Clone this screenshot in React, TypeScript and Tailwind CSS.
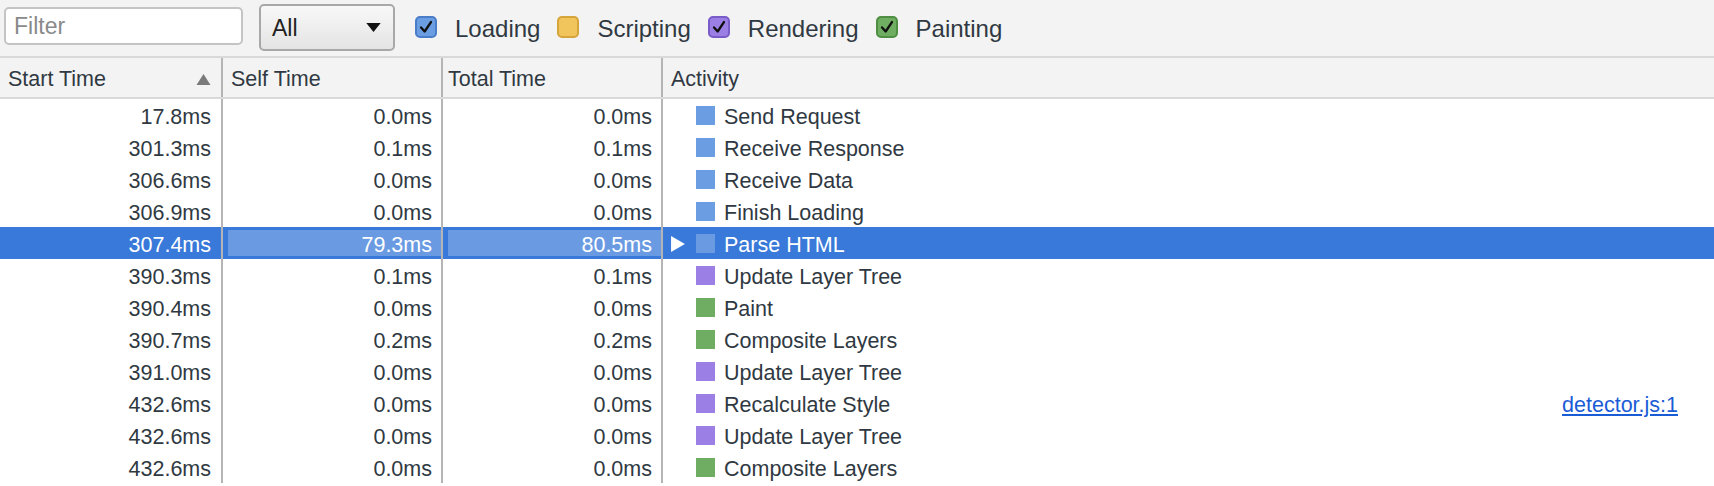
import React from 'react'

type Kind = 'loading' | 'scripting' | 'rendering' | 'painting'

interface Row {
  start: string
  self: string
  total: string
  activity: string
  kind: Kind
  link?: string
}

const rows: Row[] = [
  { start: '17.8ms', self: '0.0ms', total: '0.0ms', activity: 'Send Request', kind: 'loading' },
  { start: '301.3ms', self: '0.1ms', total: '0.1ms', activity: 'Receive Response', kind: 'loading' },
  { start: '306.6ms', self: '0.0ms', total: '0.0ms', activity: 'Receive Data', kind: 'loading' },
  { start: '306.9ms', self: '0.0ms', total: '0.0ms', activity: 'Finish Loading', kind: 'loading' },
  { start: '307.4ms', self: '79.3ms', total: '80.5ms', activity: 'Parse HTML', kind: 'loading' },
  { start: '390.3ms', self: '0.1ms', total: '0.1ms', activity: 'Update Layer Tree', kind: 'rendering' },
  { start: '390.4ms', self: '0.0ms', total: '0.0ms', activity: 'Paint', kind: 'painting' },
  { start: '390.7ms', self: '0.2ms', total: '0.2ms', activity: 'Composite Layers', kind: 'painting' },
  { start: '391.0ms', self: '0.0ms', total: '0.0ms', activity: 'Update Layer Tree', kind: 'rendering' },
  { start: '432.6ms', self: '0.0ms', total: '0.0ms', activity: 'Recalculate Style', kind: 'rendering', link: 'detector.js:1' },
  { start: '432.6ms', self: '0.0ms', total: '0.0ms', activity: 'Update Layer Tree', kind: 'rendering' },
  { start: '432.6ms', self: '0.0ms', total: '0.0ms', activity: 'Composite Layers', kind: 'painting' },
]

const SELECTED = 4

const swatch: Record<Kind, string> = {
  loading: 'bg-[#6b9de2]',
  scripting: 'bg-[#f2c45c]',
  rendering: 'bg-[#9b7fe5]',
  painting: 'bg-[#6fae62]',
}

const checkbox: Record<Kind, string> = {
  loading: 'bg-[#6b9de2] border-[#4a7cc8]',
  scripting: 'bg-[#f2c45c] border-[#d6a53a]',
  rendering: 'bg-[#9b7fe5] border-[#7a5cc8]',
  painting: 'bg-[#6fae62] border-[#4f8f43]',
}

function Check() {
  return (
    <svg viewBox="0 0 20 20" className="w-[18px] h-[18px]">
      <path d="M4.5 10.5 L8.5 15 L15.5 4.5" fill="none" stroke="#111" strokeWidth="2.6" strokeLinecap="round" strokeLinejoin="round" />
    </svg>
  )
}

function CategoryBox({ kind, label, checked }: { kind: Kind; label: string; checked: boolean }) {
  return (
    <label className="flex items-center gap-[18px] mr-[17px]">
      <span className={`w-[22px] h-[22px] rounded-[5px] border-2 flex items-center justify-center ${checkbox[kind]}`}>
        {checked && <Check />}
      </span>
      <span className="pt-[3px]">{label}</span>
    </label>
  )
}

export default function App() {
  return (
    <div className="w-[1714px] h-[486px] overflow-hidden bg-white text-[#303942] text-[21.5px] font-['Liberation_Sans',Arial,sans-serif]">
      {/* toolbar */}
      <div className="h-[58px] bg-[#f3f3f3] border-b-2 border-[#d9d9d9] flex items-start pl-[4px] pt-[4px]">
        <div className="mt-[3px] w-[239px] h-[38px] bg-white border-2 border-[#c4c4c4] rounded-[5px] flex items-center pl-[8px] text-[#8a8a8a] text-[23px]">
          Filter
        </div>
        <div className="ml-[16px] w-[136px] h-[47px] rounded-[5px] border-2 border-[#a8a8a8] bg-gradient-to-b from-[#f8f8f8] to-[#e4e4e4] flex items-center justify-between pl-[11px] pr-[12px] text-[#222] text-[23px]">
          <span className="pt-[2px]">All</span>
          <svg viewBox="0 0 16 10" className="w-[15px] h-[9px]">
            <path d="M0 0 L16 0 L8 10 Z" fill="#111" />
          </svg>
        </div>
        <div className="ml-[20px] h-[46px] flex items-center text-[#303942] text-[24px]">
          <CategoryBox kind="loading" label="Loading" checked />
          <CategoryBox kind="scripting" label="Scripting" checked={false} />
          <CategoryBox kind="rendering" label="Rendering" checked />
          <CategoryBox kind="painting" label="Painting" checked />
        </div>
      </div>

      {/* header */}
      <div className="h-[41px] bg-[#f3f3f3] border-b-2 border-[#d9d9d9] flex">
        <div className="w-[221px] flex items-center justify-between pl-[8px] pr-[10px]">
          <span className="pt-[4px]">Start Time</span>
          <svg viewBox="0 0 14 11" className="w-[15px] h-[11px] mt-[3px]">
            <path d="M7 0 L14 11 L0 11 Z" fill="#7a7a7a" />
          </svg>
        </div>
        <div className="w-[220px] border-l-2 border-[#b5b5b5] flex items-center pl-[8px]"><span className="pt-[4px]">Self Time</span></div>
        <div className="w-[220px] border-l-2 border-[#b5b5b5] flex items-center pl-[5px]"><span className="pt-[4px]">Total Time</span></div>
        <div className="flex-1 border-l-2 border-[#b5b5b5] flex items-center pl-[8px]"><span className="pt-[4px]">Activity</span></div>
      </div>

      {/* rows */}
      {rows.map((r, i) => {
        const sel = i === SELECTED
        return (
          <div key={i} className={`h-[32px] flex ${sel ? 'bg-[#3879d9] text-white' : ''}`}>
            <div className="w-[221px] flex items-center justify-end pr-[10px]">
              <span className="pt-[4px]">{r.start}</span>
            </div>
            <div className="w-[220px] border-l-2 border-[#b5b5b5] flex items-stretch pl-[5px] py-[3px]">
              <div className={`flex-1 flex items-center justify-end pr-[9px] ${sel ? 'bg-[#6a9be2]' : ''}`}>
                <span className="pt-[4px]">{r.self}</span>
              </div>
            </div>
            <div className="w-[220px] border-l-2 border-[#b5b5b5] flex items-stretch pl-[5px] py-[3px]">
              <div className={`flex-1 flex items-center justify-end pr-[9px] ${sel ? 'bg-[#6a9be2]' : ''}`}>
                <span className="pt-[4px]">{r.total}</span>
              </div>
            </div>
            <div className="flex-1 border-l-2 border-[#b5b5b5] flex items-center pl-[8px] pr-[36px]">
              <span className="w-[25px] flex items-center pt-[1px]">
                {sel && (
                  <svg viewBox="0 0 13 15" className="w-[14px] h-[16px]">
                    <path d="M0 0 L13 7.5 L0 15 Z" fill="#fff" />
                  </svg>
                )}
              </span>
              <span className={`w-[19px] h-[19px] mt-[1px] ${sel ? 'bg-[#6a9be2]' : swatch[r.kind]}`} />
              <span className="ml-[9px] flex-1 pt-[4px]">{r.activity}</span>
              {r.link && <span className="pt-[4px] text-[#1a5cd6] underline">{r.link}</span>}
            </div>
          </div>
        )
      })}
    </div>
  )
}
